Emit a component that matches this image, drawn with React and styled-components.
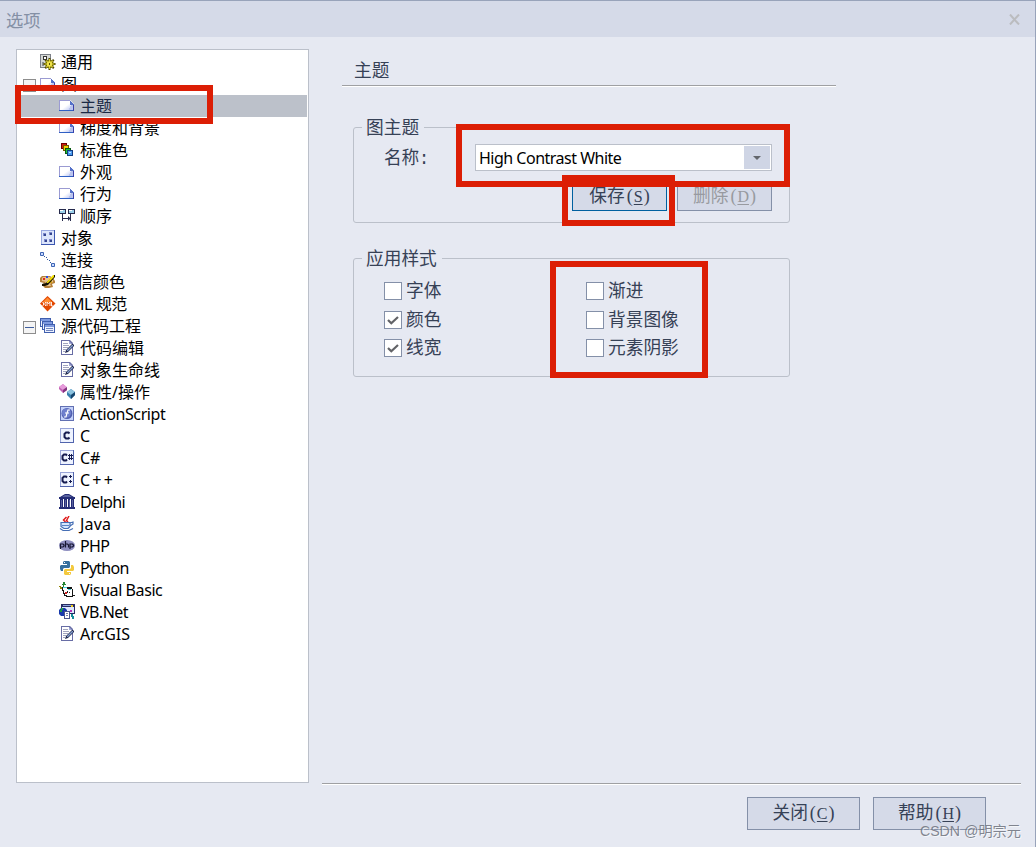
import { useState } from 'react';
import styled, { createGlobalStyle } from 'styled-components';

const GlobalStyle = createGlobalStyle`
  * {
    box-sizing: border-box;
  }

  body {
    margin: 0;
    overflow: hidden;
  }

  button {
    font: inherit;
  }
`;

const DIALOG_FONT = '"Liberation Mono", "Noto Sans CJK SC", monospace';
const TREE_FONT = '"Noto Sans", "Noto Sans CJK SC", sans-serif';

const PageIcon = () => (
  <Icon>
    <defs>
      <linearGradient id="page" x1="0" y1="0" x2="1" y2="1">
        <stop offset="0.5" stopColor="#fff" />
        <stop offset="1" stopColor="#9fb0ee" />
      </linearGradient>
    </defs>
    <path d="M0 2h11l4 4v7H0z" fill="url(#page)" />
    <path d="M0 2h11v1H1v9H0z" fill="#9b9bd2" />
    <path d="M0 12h15v1H0z" fill="#2f5fc4" />
    <path d="M14 6h1v7h-1z" fill="#3b3fa8" />
    <path d="M11 3h1v1h1v1h1v1h1v1h-4z" fill="#5470c8" />
    <path d="M12 7h2v3h-1v2h-3v-2h1V8h1z" fill="#b9c3ee" />
  </Icon>
);

const GearIcon = () => (
  <Icon>
    <path d="M0 0h11v14H0z" fill="#7c8088" />
    <path d="M1 1h9v12H1z" fill="#d5d8d5" />
    <path d="M3 2h4v4H3z" fill="#333" />
    <path d="M4 3h2v2H4z" fill="#fff" />
    <path d="M2 8h2v4H2z" fill="#8c9090" />
    <path
      d="M9.500 4v12M3.500 10h12M5.200 5.700l8.600 8.600M13.800 5.700l-8.600 8.600"
      stroke="#4d4700"
      strokeWidth="2"
    />
    <circle cx="9.500" cy="10" r="4.300" fill="#6f6800" />
    <path
      d="M9.500 5v10M4.500 10h10M6.200 6.700l6.600 6.600M12.800 6.700l-6.600 6.600"
      stroke="#d8cc30"
      strokeWidth="1.200"
    />
    <circle cx="9.500" cy="10" r="2.700" fill="#efe24a" />
    <path d="M9 9h1v2H9z" fill="#5a5400" />
  </Icon>
);

const ColorsIcon = () => (
  <Icon>
    {[
      [2, 1, '#d51c0a', '#6b0000'],
      [4, 3, '#f2ce00', '#6f5b00'],
      [6, 6, '#20c530', '#075b12'],
      [8, 8, '#4b9cf2', '#123c80'],
    ].map(([x, y, fill, edge]) => (
      <g key={x}>
        <path d={`M${x} ${y}h6v6h-6z`} fill={edge} />
        <path d={`M${x + 1} ${y + 1}h4v4h-4z`} fill={fill} />
      </g>
    ))}
    <path d="M10 10h2v1h-2z" fill="#c3e0ff" />
  </Icon>
);

const SequenceIcon = () => (
  <Icon>
    {[0, 9].map(x => (
      <g key={x}>
        <path d={`M${x} 1h7v5H${x}z`} fill="#262a4c" />
        <path d={`M${x + 1} 2h5v3h-5z`} fill="#9ad0ea" />
        <path d={`M${x + 1} 2h3v1h-3z`} fill="#fff" />
      </g>
    ))}
    <path
      d="M3 6h1v4h5V8l2 2V6h1v7h-1v-2l-2 2v-2H4v2H3z"
      fill="#262a4c"
    />
  </Icon>
);

const ObjectIcon = () => (
  <Icon>
    <path d="M1 0h14v15H1z" fill="#3b56b0" />
    <path d="M1 0h13v14H1z" fill="#98a8e0" />
    <path d="M2 1h12v13H2z" fill="#dce5fb" />
    {[
      [3, 3],
      [9, 2],
      [4, 9],
      [9, 9],
    ].map(([x, y]) => (
      <g key={`${x}-${y}`}>
        <path d={`M${x} ${y}h3v3h-3z`} fill="#7d88cc" />
        <path d={`M${x + 1} ${y + 1}h2v2h-2z`} fill="#34458f" />
      </g>
    ))}
  </Icon>
);

const LinkIcon = () => (
  <Icon>
    <path
      d="M.5.5h3v3h-3zM11.500 11.500h3v3h-3z"
      fill="#c8d8ff"
      stroke="#3d65b5"
    />
    <path
      d="M4 4h1v1H4zM6 5h1v1H6zM7 7h1v1H7zM9 8h1v1H9zM10 10h1v1h-1z"
      fill="#31589f"
    />
  </Icon>
);

const PaletteIcon = () => (
  <Icon>
    <path d="M2 2h8l3 2 2 3v2l-3 1 1 3-4 1H5l-3-3 2-2-4-1V4z" fill="#b68038" />
    <path d="M3 3h7l3 3v2l-3 2 1 2H5l-1-2 2-2-4-1V4z" fill="#e7c38b" />
    <path d="M3 4h2v2H3z" fill="#df2820" />
    <path d="M6 2h2v2H6z" fill="#2749dd" />
    <path d="M10 7h2v2h-2z" fill="#d6a518" />
    <path d="M14 1h1v2L8 11l-3 1H2v-2l4-1z" fill="#191200" />
    <path d="M13 1h1v2L8 9H7V8z" fill="#f7e300" />
  </Icon>
);

const XmlIcon = () => (
  <Icon>
    <path d="M7.500 0l8 7.500-8 8-7.500-8z" fill="#e34700" />
    <path d="M7.500 1.500l5 5h-10z" fill="#ff8a30" />
    <path
      d="M3 6v1l1 1-1 1v1M5.500 6v1l-1 1 1 1v1M7 10V6l1.500 2L10 6v4M11.500 6v4H13"
      fill="none"
      stroke="#fff"
      strokeWidth=".9"
    />
  </Icon>
);

const SourceIcon = () => (
  <Icon>
    {[0, 2, 4].map((x, i) => (
      <g key={x}>
        <path d={`M${x} ${i * 3}h11v9h-11z`} fill="#405fae" />
        <path d={`M${x + 1} ${i * 3 + 3}h9v5h-9z`} fill="#edf2ff" />
        <path d={`M${x + 1} ${i * 3 + 1}h9v2h-9z`} fill="#7f9ae0" />
      </g>
    ))}
    <path d="M6 10h7v1H6zM6 12h7v1H6z" fill="#7185bd" />
  </Icon>
);

const EditIcon = () => (
  <Icon>
    <path d="M2 0h9l3 3v12H2z" fill="#686da5" />
    <path d="M3 1h7v3h3v10H3z" fill="#fff" />
    <path d="M10 1l3 3h-3z" fill="#a4acd9" />
    <path
      d="M4 3h5v1H4zM4 5h6v1H4zM4 7h5v1H4zM4 9h3v1H4zM4 11h2v1H4z"
      fill="#a1a4bf"
    />
    <path d="M13 4h1l1 1v1l-6 6-3 1 1-3z" fill="#21284e" />
    <path d="M13 5h1v1l-5 5H8v-1z" fill="#829ccb" />
  </Icon>
);

const AttributeIcon = () => (
  <Icon>
    <path d="M4 0l4 4v2L4 9 0 5V3z" fill="#c462b6" />
    <path d="M4 0l4 3-4 3-4-3z" fill="#e69bda" />
    <path d="M4 6l4-3v3L4 9z" fill="#81347e" />
    <path d="M12 5l4 3v3l-4 4-4-4V8z" fill="#397fad" />
    <path d="M12 5l4 3-4 3-4-3z" fill="#8dc3df" />
    <path d="M12 11l4-3v3l-4 4z" fill="#18466f" />
  </Icon>
);

const ScriptIcon = () => (
  <Icon>
    <path d="M1 0h14v15H1z" fill="#6270b2" />
    <path d="M2 1h12v13H2z" fill="#c4d2fa" />
    <circle cx="8" cy="7.500" r="5.500" fill="#5260b0" />
    <circle cx="7.500" cy="7" r="4.500" fill="#6f80cd" />
    <path
      d="M11 4H9L8 7l-1 4H5M6 7h4"
      fill="none"
      stroke="#fff"
      strokeWidth="1.200"
    />
  </Icon>
);

const CIcon = ({ suffix }) => (
  <Icon>
    <path d="M1 0h14v15H1z" fill="#5164ad" />
    <path d="M1 0h13v14H1z" fill="#98a4d8" />
    <path d="M2 1h12v13H2z" fill="#eef3ff" />
    <path
      d={
        suffix
          ? 'M8 5.500L7 4.500H5L3.500 6v3L5 10.500h2l1-1'
          : 'M10.500 5.500L9.500 4.500H7L5.500 6v3L7 10.500h2.500l1-1'
      }
      fill="none"
      stroke="#161c50"
      strokeWidth="2"
    />
    {suffix === '#' && (
      <path
        d="M10 4h1v1h1V4h1v1h1v1h-1v2h1v1h-1v1h-1V9h-1v1h-1V9H9V8h1V6H9V5h1zM11 6v2h1V6z"
        fill="#161c50"
      />
    )}
    {suffix === '+' && (
      <path
        d="M11 3h1v1h1v1h-1v1h-1V5h-1V4h1zM11 8h1v1h1v1h-1v1h-1v-1h-1V9h1z"
        fill="#161c50"
      />
    )}
  </Icon>
);

const DelphiIcon = () => (
  <Icon>
    <path
      d="M6 0h4l5 3h1v2H0V3h1zM1 5h3v8H1zM5 5h3v8H5zM9 5h2v8H9zM12 5h3v8h-3zM0 13h16v2H0z"
      fill="#252d76"
    />
    <path
      d="M6 1h4l3 2H3zM2 6h1v7H2zM6 6h1v7H6zM10 6h1v7h-1zM13 6h1v7h-1z"
      fill="#5a639f"
    />
  </Icon>
);

const JavaIcon = () => (
  <Icon>
    <path
      d="M6.500 6L4.500 4l3-3M9 6L7.500 4.500 10 0"
      fill="none"
      stroke="#df1c1c"
      strokeWidth="1.500"
    />
    <path d="M2 7h9v4l-2 2H5l-3-3z" fill="#d6e6fc" />
    <path
      d="M2 6.500h9v4l-2 2H5l-3-2zM11 7l3-1v2l-3 2M1 12.500l3 2h6l4-2"
      fill="none"
      stroke="#466fb5"
      strokeWidth="1.200"
    />
    <path d="M3 9h7v1H3z" fill="#5a83c5" />
  </Icon>
);

const PhpIcon = () => (
  <Icon>
    <ellipse cx="8" cy="7.500" rx="8" ry="5.500" fill="#8f8fc0" />
    <path
      d="M1.500 11V6H4l1 1v1L4 9H2M6.500 3v6.500M6.500 6h2l1 1v2.500M11 11V6h2.500l1 1v1l-1 1H11"
      fill="none"
      stroke="#161632"
      strokeWidth="1.200"
    />
  </Icon>
);

const PythonIcon = () => (
  <Icon>
    <path
      d="M5 1h5l1 1v5l-1 1H5L4 9v2H2L1 9V6l1-1h6V4H4V2z"
      fill="#356f9e"
    />
    <path
      d="M12 5h2l1 2v3l-1 1H8v1h4v2l-1 1H6l-1-1v-4l1-1h5l1-1z"
      fill="#f3c93f"
    />
    <path d="M5 2h1v1H5zM10 13h1v1h-1z" fill="#fff" />
  </Icon>
);

const VisualBasicIcon = () => (
  <Icon>
    <path d="M3 5h10v2h1v8H7v-1H5v-2H4V9H3z" fill="#151515" />
    <path d="M4 6h4v1h5v7H8v-1H6v-2H5V8H4z" fill="#fff" />
    <path d="M4 5h4v1H4zM9 7h3v1H9z" fill="#45d4dc" />
    <path d="M4 0h2v2h1v1H5v2H4V3H3V2h1z" fill="#238632" />
    <path d="M0 4h2v1H0zM1 5h2v2H1z" fill="#8d8200" />
    <path d="M6 10h2v2H6z" fill="#d32222" />
    <path d="M8 9h1v2H8zM10 10h1v1h-1zM14 13h2v1h-2z" fill="#222" />
  </Icon>
);

const VbNetIcon = () => (
  <Icon>
    <path d="M2 0h14v10H2z" fill="#282c63" />
    <path d="M3 3h12v6H3z" fill="#dfe7ff" />
    <path d="M4 1h8v1H4z" fill="#8ba3dc" />
    <path d="M2 4h4l2 2v4l-2 2H2L0 10V6z" fill="#1739ac" />
    <path d="M2 4h2v2H3v2H1V6h1zM5 7h2v3H5z" fill="#209b43" />
    <path d="M5 7h6v8H5z" fill="#4c568d" />
    <path d="M6 8h4v6H6z" fill="#fff" />
    <path d="M7 9h2v1H7zM7 11h2v1H7z" fill="#727ca7" />
    <path d="M12 1h2v2h-2z" fill="#efce1e" />
    <path d="M11 6h2v2h-2z" fill="#b731b7" />
    <path d="M12 10h2v2h1v3h-2v-2h-1z" fill="#168d9c" />
  </Icon>
);

const TREE = [
  { text: '通用', level: 1, icon: <GearIcon /> },
  { text: '图', level: 1, icon: <PageIcon />, open: true },
  { text: '主题', level: 2, icon: <PageIcon /> },
  { text: '梯度和背景', level: 2, icon: <PageIcon /> },
  { text: '标准色', level: 2, icon: <ColorsIcon /> },
  { text: '外观', level: 2, icon: <PageIcon /> },
  { text: '行为', level: 2, icon: <PageIcon /> },
  { text: '顺序', level: 2, icon: <SequenceIcon /> },
  { text: '对象', level: 1, icon: <ObjectIcon /> },
  { text: '连接', level: 1, icon: <LinkIcon /> },
  { text: '通信颜色', level: 1, icon: <PaletteIcon /> },
  { text: 'XML 规范', level: 1, icon: <XmlIcon />, spacing: -0.45 },
  { text: '源代码工程', level: 1, icon: <SourceIcon />, open: true },
  { text: '代码编辑', level: 2, icon: <EditIcon /> },
  { text: '对象生命线', level: 2, icon: <EditIcon /> },
  { text: '属性/操作', level: 2, icon: <AttributeIcon /> },
  { text: 'ActionScript', level: 2, icon: <ScriptIcon />, spacing: -0.4 },
  { text: 'C', level: 2, icon: <CIcon /> },
  { text: 'C#', level: 2, icon: <CIcon suffix="#" /> },
  { text: 'C++', level: 2, icon: <CIcon suffix="+" />, spacing: 2.2 },
  { text: 'Delphi', level: 2, icon: <DelphiIcon />, spacing: -0.6 },
  { text: 'Java', level: 2, icon: <JavaIcon />, spacing: 0.2 },
  { text: 'PHP', level: 2, icon: <PhpIcon />, spacing: -0.6 },
  { text: 'Python', level: 2, icon: <PythonIcon />, spacing: -0.75 },
  { text: 'Visual Basic', level: 2, icon: <VisualBasicIcon />, spacing: -0.42 },
  { text: 'VB.Net', level: 2, icon: <VbNetIcon />, spacing: -0.5 },
  { text: 'ArcGIS', level: 2, icon: <EditIcon /> },
];

const STYLES = ['字体', '渐进', '颜色', '背景图像', '线宽', '元素阴影'];

const Mnemonic = ({ children }) => (
  <Key>
    (<u>{children}</u>)
  </Key>
);

export default function App() {
  const [selected, setSelected] = useState('主题');
  const [checked, setChecked] = useState(['颜色', '线宽']);

  const toggle = name =>
    setChecked(
      checked.includes(name)
        ? checked.filter(v => v !== name)
        : [...checked, name]
    );

  return (
    <Dialog>
      <GlobalStyle />
      <TitleBar>
        <span>选项</span>
        <svg width="11" height="11" viewBox="0 0 11 11">
          <path d="M1 .5l9 10M10 .5l-9 10" stroke="#bbbcbf" strokeWidth="2" />
        </svg>
      </TitleBar>
      <Body>
        <Tree>
          {TREE.map(v => (
            <TreeRow
              key={v.text}
              $selected={v.text === selected}
              onClick={() => setSelected(v.text)}
            >
              <Indent $level={v.level}>{v.open && <Expander />}</Indent>
              {v.icon}
              <TreeText $spacing={v.spacing}>{v.text}</TreeText>
            </TreeRow>
          ))}
        </Tree>
        <Main>
          <Heading>主题</Heading>
          <Group $height={106} $top={31}>
            <Legend $drop={4}>图主题</Legend>
            <NameRow>
              <Label>名称:</Label>
              <Select>
                <span>High Contrast White</span>
                <Arrow>
                  <svg width="8" height="4" viewBox="0 0 8 4">
                    <path d="M0 0h8L4 4z" fill="#63666c" />
                  </svg>
                </Arrow>
              </Select>
            </NameRow>
            <Actions>
              <SmallButton $focused>
                保存<Mnemonic>S</Mnemonic>
              </SmallButton>
              <SmallButton disabled>
                删除<Mnemonic>D</Mnemonic>
              </SmallButton>
            </Actions>
          </Group>
          <Group $height={129} $top={25}>
            <Legend $drop={3}>应用样式</Legend>
            <Checks>
              {STYLES.map(v => (
                <CheckItem key={v} onClick={() => toggle(v)}>
                  <Box>
                    {checked.includes(v) && (
                      <svg width="12" height="9" viewBox="0 0 12 9">
                        <path
                          d="M1 4l3.300 3.300L11 1"
                          fill="none"
                          stroke="#626367"
                          strokeWidth="2.200"
                        />
                      </svg>
                    )}
                  </Box>
                  <CheckText>{v}</CheckText>
                </CheckItem>
              ))}
            </Checks>
          </Group>
          <Footer>
            <FooterButton>
              关闭<Mnemonic>C</Mnemonic>
            </FooterButton>
            <FooterButton>
              帮助<Mnemonic>H</Mnemonic>
            </FooterButton>
          </Footer>
        </Main>
      </Body>
      <Mark $x={15} $y={85} $w={198} $h={39} />
      <Mark $x={456} $y={124} $w={334} $h={63} />
      <Mark $x={562} $y={175} $w={113} $h={51} />
      <Mark $x={550} $y={261} $w={158} $h={117} />
      <Watermark>CSDN @明宗元</Watermark>
    </Dialog>
  );
}

const Dialog = styled.div`
  position: relative;
  display: flex;
  flex-direction: column;
  width: 1036px;
  height: 847px;
  overflow: hidden;
  border-top: 1px solid #98a3ba;
  border-right: 1px solid #98a3ba;
  background: #e6e9f2;
  color: #364156;
  font-family: ${DIALOG_FONT};
  font-size: 17.7px;
`;

const TitleBar = styled.div`
  display: flex;
  align-items: center;
  justify-content: space-between;
  height: 36px;
  padding: 0 15px 0 6px;
  background: #d5dae8;
  color: #8490a5;
  font-size: 17.3px;
`;

const Body = styled.div`
  display: flex;
  flex: 1;
  padding: 12px 14px 0 16px;
`;

const Tree = styled.div`
  width: 293px;
  height: 734px;
  padding: 1px;
  border: 1px solid #bbc0ca;
  background: #fff;
  font-family: ${TREE_FONT};
  font-size: 16px;
  color: #000;
`;

const TreeRow = styled.div`
  display: flex;
  align-items: center;
  height: 22px;
  background: ${p => (p.$selected ? '#bcc1ca' : 'transparent')};
  color: ${p => (p.$selected ? '#1b2a45' : '#000')};
`;

const Indent = styled.div`
  display: flex;
  flex: none;
  width: ${p => (p.$level === 1 ? 22 : 41)}px;
  padding-left: 5px;
`;

const Expander = styled.span`
  display: flex;
  align-items: center;
  justify-content: center;
  width: 13px;
  height: 13px;
  margin-top: 2px;
  border: 1px solid #8d8d8d;
  background: #f4f4f4;

  &::before {
    content: '';
    width: 9px;
    height: 1px;
    background: #405f9e;
  }
`;

const Icon = styled.svg.attrs({
  width: 16,
  height: 16,
  viewBox: '0 0 16 16',
})`
  flex: none;
`;

const TreeText = styled.span`
  margin-left: 5px;
  letter-spacing: ${p => p.$spacing || 0}px;
  line-height: 22px;
  white-space: pre;
`;

const Main = styled.div`
  display: flex;
  flex: 1;
  flex-direction: column;
  margin-left: 13px;
`;

const Heading = styled.div`
  width: 494px;
  margin: 13px 0 0 20px;
  padding: 0 0 2px 12px;
  border-bottom: 1px solid #9fa0a3;
  box-shadow: 0 1px #fff;
  line-height: 21px;
`;

const Group = styled.fieldset`
  width: 437px;
  min-width: 0;
  height: ${p => p.$height}px;
  margin: ${p => p.$top}px 0 0 31px;
  padding: 0 0 0 8px;
  border: 1px solid #bbc0ca;
  border-radius: 3px;
`;

const Legend = styled.legend`
  height: 21px;
  padding: 0 5px 0 4px;
  line-height: ${p => 21 + p.$drop}px;
`;

const NameRow = styled.div`
  display: flex;
  align-items: center;
  height: 33px;
  padding: 6px 0 0 22px;
`;

const Label = styled.div`
  width: 91px;
  padding-top: 2px;
  letter-spacing: -0.3px;
  line-height: 22px;
`;

const Select = styled.div`
  display: flex;
  align-items: center;
  justify-content: space-between;
  width: 297px;
  height: 27px;
  padding: 1px 1px 1px 3px;
  border: 1px solid #bbc0ca;
  background: #fff;
  color: #000;
  font-family: ${TREE_FONT};
  font-size: 16px;
  letter-spacing: -0.5px;
`;

const Arrow = styled.div`
  display: flex;
  align-items: center;
  justify-content: center;
  width: 26px;
  height: 23px;
  background: #cfd5e5;
`;

const Actions = styled.div`
  display: flex;
  gap: 10px;
  padding: 11px 0 0 210px;
`;

const Button = styled.button`
  padding: 0;
  border: 1px solid #8490a8;
  background: #d5dae8;
  color: inherit;
`;

const SmallButton = styled(Button)`
  width: 95px;
  height: 29px;
  border-color: ${p => (p.$focused ? '#0060a0' : '#8490a8')};
  color: ${p => (p.disabled ? '#989aa0' : 'inherit')};
  line-height: 26px;
`;

const Key = styled.span`
  display: inline-flex;
  align-items: baseline;
  margin-left: 2px;
  font-family: 'Liberation Serif', serif;
  font-size: 18px;

  u {
    min-width: 9px;
    margin: 0 1px;
    font-size: 16px;
    text-align: center;
    text-underline-offset: 2px;
  }
`;

const Checks = styled.div`
  display: grid;
  grid-template-columns: 202px 1fr;
  grid-template-rows: 29px 28px 18px;
  padding: 13px 0 0 22px;
`;

const CheckItem = styled.div`
  display: flex;
  align-items: center;
  gap: 4px;
  height: 18px;
  line-height: 18px;
`;

const CheckText = styled.span`
  padding-top: 2px;
`;

const Box = styled.span`
  display: flex;
  align-items: center;
  justify-content: center;
  width: 18px;
  height: 18px;
  border: 1px solid #8490a8;
  background: #fff;
`;

const Footer = styled.div`
  display: flex;
  justify-content: flex-end;
  gap: 13px;
  height: 64px;
  margin-top: auto;
  padding: 13px 35px 0 0;
  border-top: 1px solid #9fa0a3;
  box-shadow: inset 0 1px #fff;
`;

const FooterButton = styled(Button)`
  width: 113px;
  height: 33px;
  padding-bottom: 5px;
`;

const Mark = styled.div`
  position: absolute;
  left: ${p => p.$x}px;
  top: ${p => p.$y - 1}px;
  width: ${p => p.$w}px;
  height: ${p => p.$h}px;
  border: 6px solid #dc1e05;
  pointer-events: none;
`;

const Watermark = styled.div`
  position: absolute;
  right: 14px;
  bottom: 5px;
  color: rgba(110, 114, 125, 0.85);
  font-family: 'Liberation Sans', 'Noto Sans CJK SC', sans-serif;
  font-size: 14.2px;
  line-height: 22px;
  text-shadow: 1px 1px 0 rgba(255, 255, 255, 0.6);
`;
